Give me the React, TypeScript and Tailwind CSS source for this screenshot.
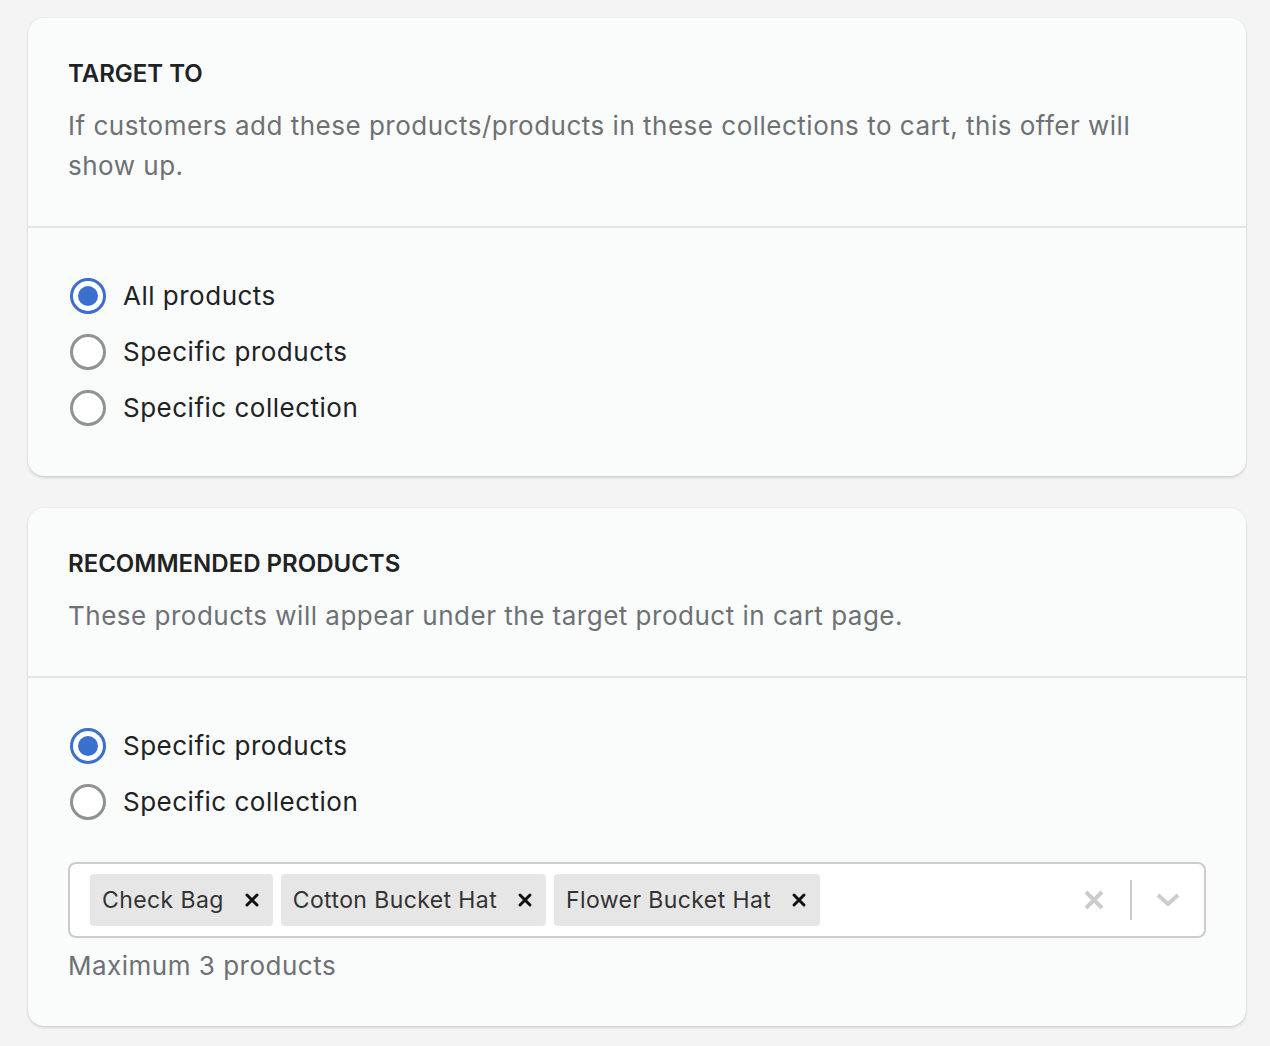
import React from 'react'

const font = { fontFamily: 'Inter, "Noto Sans", "Liberation Sans", sans-serif' }

function Radio({ label, checked }: { label: string; checked?: boolean }) {
  return (
    <label className="flex items-center h-[56px] gap-[17px] pl-[2px] cursor-pointer">
      {checked ? (
        <span className="w-[36px] h-[36px] rounded-full border-[3px] border-[#3b6fce] bg-white flex items-center justify-center">
          <span className="w-[20px] h-[20px] rounded-full bg-[#3b6fce]" />
        </span>
      ) : (
        <span className="w-[36px] h-[36px] rounded-full border-[3px] border-[#8e9195] bg-white" />
      )}
      <span className="text-[26px] leading-[40px] tracking-[0.5px] text-[#202223]">{label}</span>
    </label>
  )
}

function Tag({ label }: { label: string }) {
  return (
    <div className="flex items-center h-[52px] bg-[#e6e6e6] rounded-[4px]">
      <span className="pl-[12px] pr-[6px] text-[23px] tracking-[0.4px] text-[#333]">{label}</span>
      <span className="pl-[14px] pr-[13px] flex items-center">
        <svg width="16" height="16" viewBox="0 0 16 16">
          <path d="M3 3 L13 13 M13 3 L3 13" stroke="#111" strokeWidth="3" strokeLinecap="round" />
        </svg>
      </span>
    </div>
  )
}

function Card({ title, text, children }: { title: string; text: string; children: React.ReactNode }) {
  return (
    <div className="bg-[#fafbfb] rounded-[16px] shadow-[0_2px_3px_rgba(0,0,0,0.12),0_0_0_1px_rgba(63,63,68,0.03)]">
      <div className="p-[40px] border-b-2 border-[#e3e4e6]">
        <h2 className="text-[24px] leading-[32px] font-semibold uppercase text-[#202223]">{title}</h2>
        <p className="mt-[16px] max-w-[1100px] text-[26px] leading-[40px] tracking-[0.5px] text-[#6d7175]">{text}</p>
      </div>
      <div className="p-[40px]">{children}</div>
    </div>
  )
}

export default function App() {
  return (
    <div className="min-h-screen bg-[#f4f4f4] px-[28px] pt-[18px] pb-[20px]" style={font}>
      <div className="w-[1218px] flex flex-col gap-[32px]">
        <Card
          title="Target to"
          text="If customers add these products/products in these collections to cart, this offer will show up."
        >
          <Radio label="All products" checked />
          <Radio label="Specific products" />
          <Radio label="Specific collection" />
        </Card>
        <Card title="Recommended products" text="These products will appear under the target product in cart page.">
          <Radio label="Specific products" checked />
          <Radio label="Specific collection" />
          <div className="mt-[32px] h-[76px] bg-white border-2 border-[#cccccc] rounded-[8px] flex items-center">
            <div className="flex-1 flex items-center gap-[8px] pl-[20px]">
              <Tag label="Check Bag" />
              <Tag label="Cotton Bucket Hat" />
              <Tag label="Flower Bucket Hat" />
            </div>
            <div className="flex items-center h-full">
              <span className="pl-[16px] pr-[26px] flex items-center">
                <svg width="20" height="20" viewBox="0 0 20 20">
                  <path d="M2 2 L18 18 M18 2 L2 18" stroke="#cccccc" strokeWidth="4" />
                </svg>
              </span>
              <span className="w-[2px] h-[40px] bg-[#cccccc]" />
              <span className="pl-[24px] pr-[24px] flex items-center">
                <svg width="24" height="16" viewBox="0 0 24 16">
                  <path d="M2 3 L12 12 L22 3" stroke="#cccccc" strokeWidth="4" fill="none" />
                </svg>
              </span>
            </div>
          </div>
          <p className="mt-[8px] text-[26px] leading-[40px] tracking-[0.5px] text-[#6d7175]">Maximum 3 products</p>
        </Card>
      </div>
    </div>
  )
}
